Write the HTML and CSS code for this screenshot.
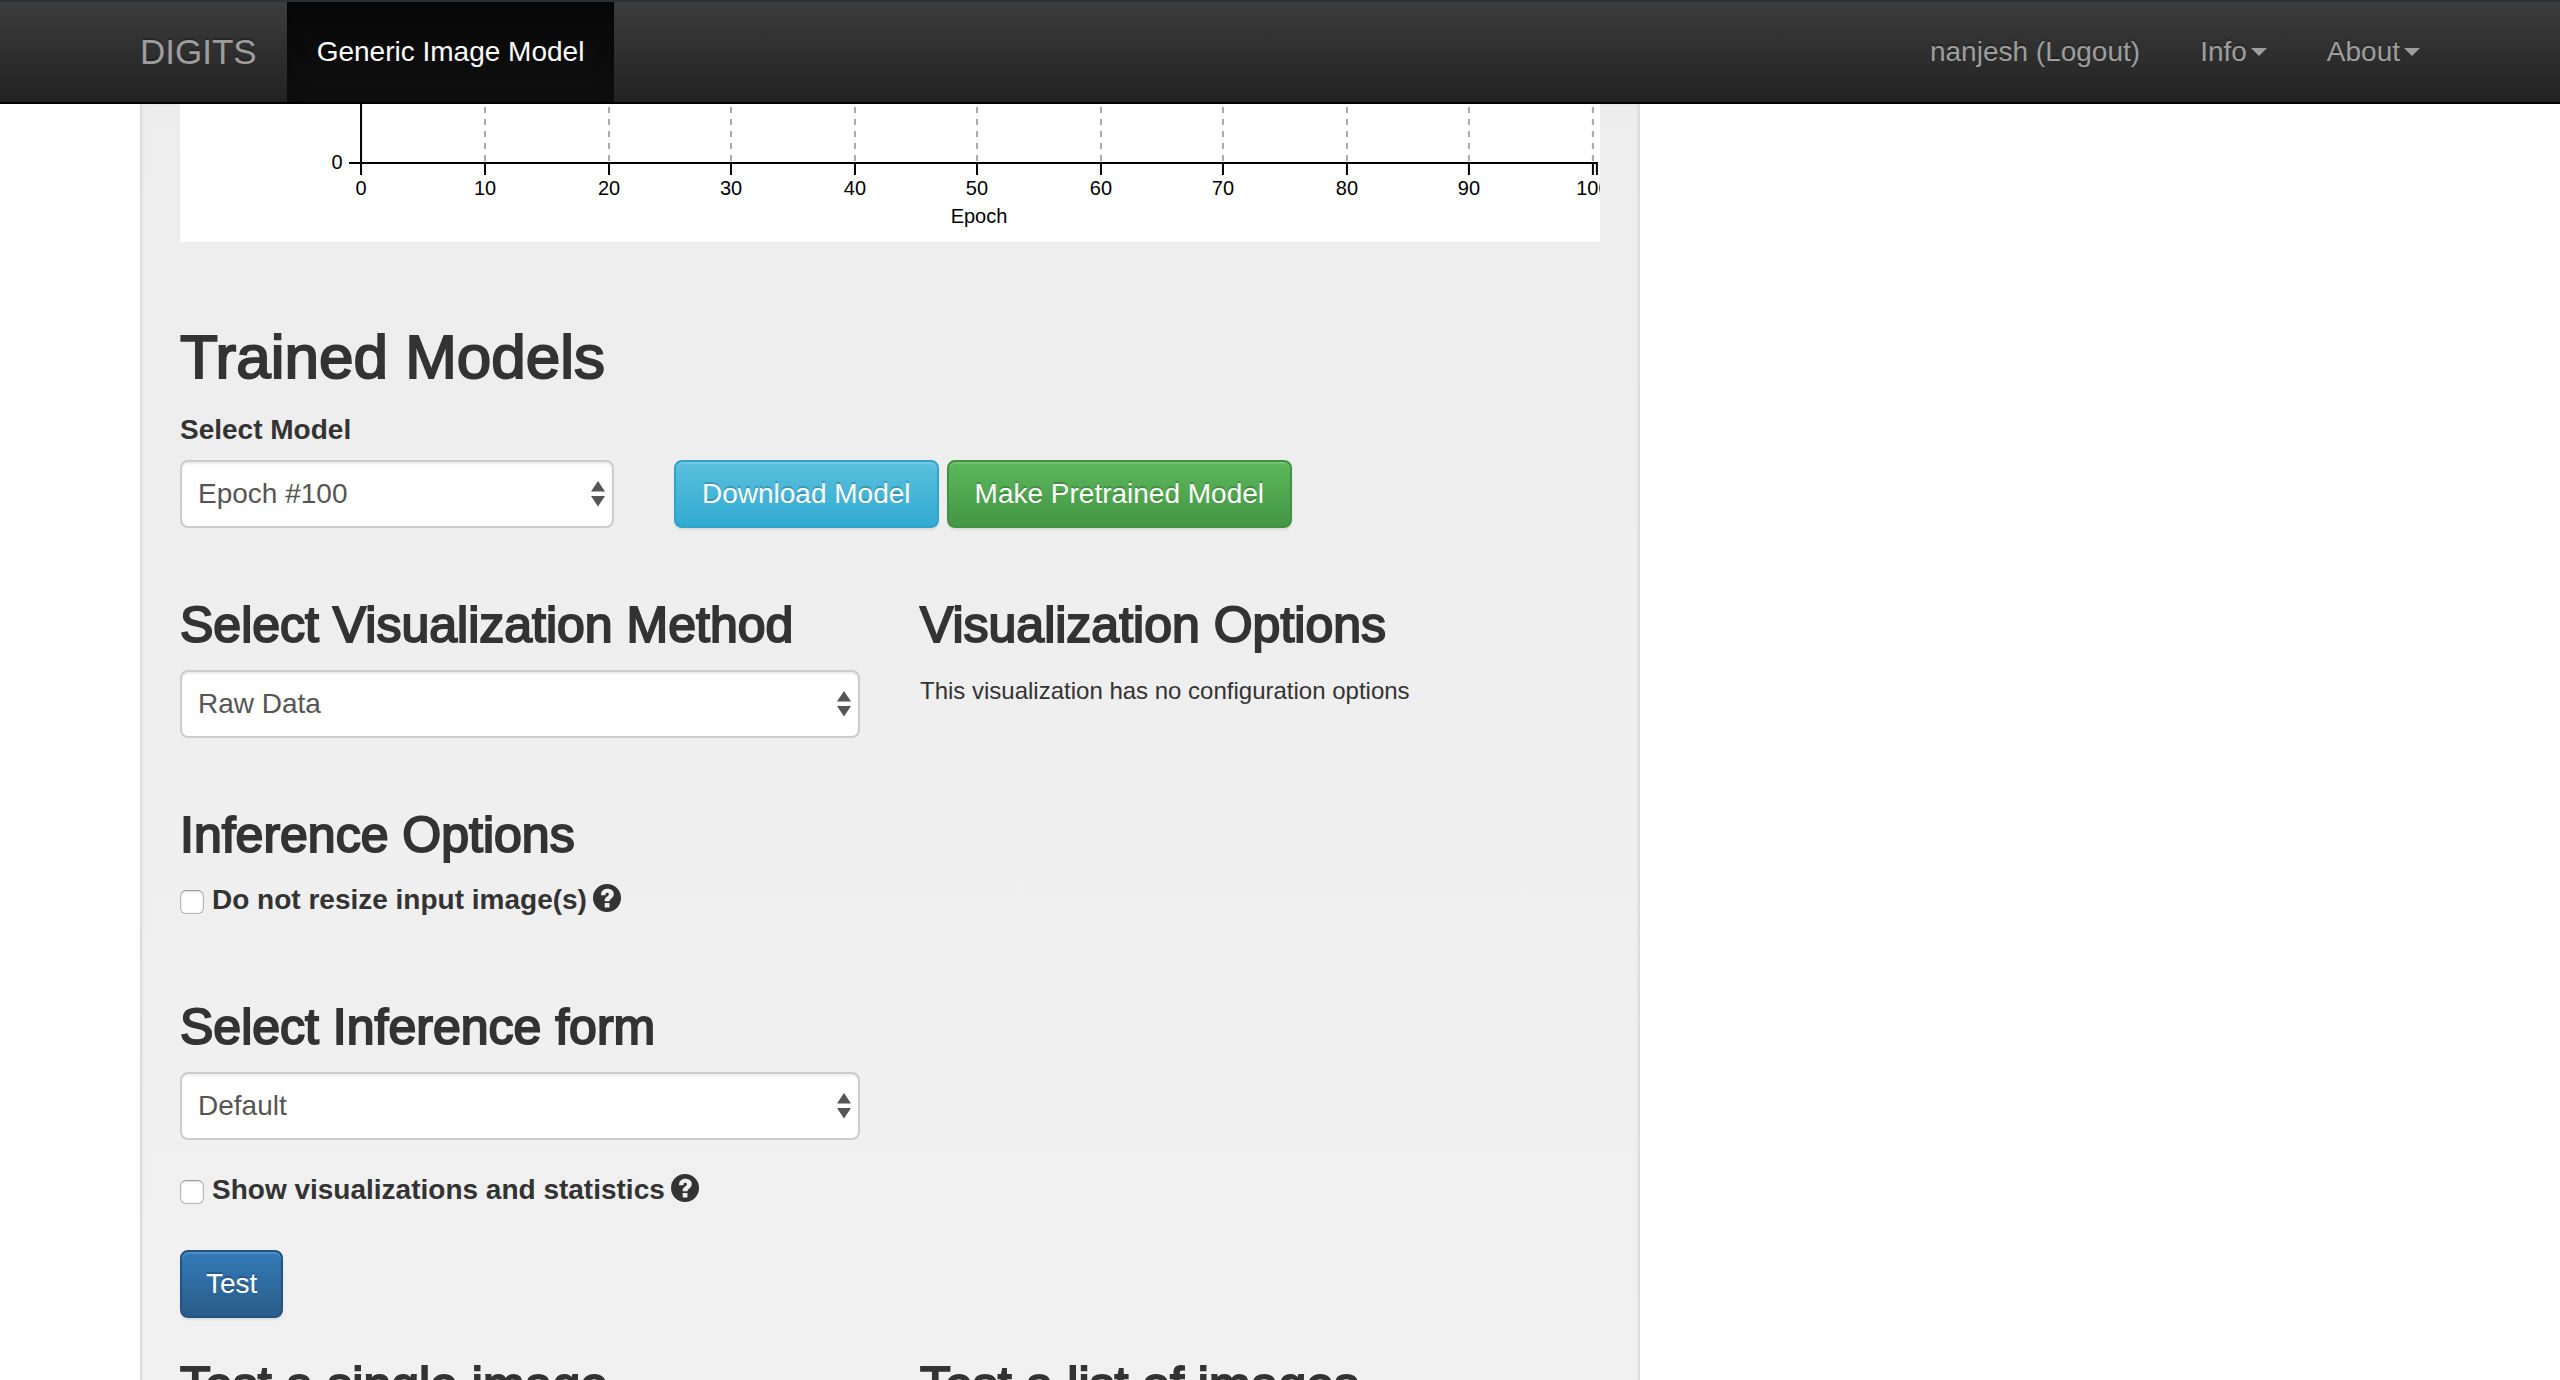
FILE: index.html
```html
<!DOCTYPE html>
<html lang="en">
<head>
<meta charset="utf-8">
<title>Generic Image Model - DIGITS</title>
<link rel="stylesheet" href="styles.css">
</head>
<body>
<svg class="symbols" aria-hidden="true">
  <symbol id="question" viewBox="0 0 28 28">
    <path fill-rule="evenodd" d="M14 0a14 14 0 1 1 0 28a14 14 0 0 1 0-28zM11.700 19v4.500h4.800v-4.500zM8 11.200h4.400c0-1.700.6-2.500 1.800-2.500c1.100 0 1.700.6 1.700 1.500c0 2-4.200 2.600-4.200 6v1h4.700c0-2.300 4.400-3.200 4.400-7.200c0-3-2.600-5.200-6.300-5.200c-4 0-6.500 2.400-6.500 6.400z"/>
  </symbol>
  <symbol id="updown" viewBox="0 0 14 26">
    <path d="M7 0l7 10.500H0zM0 15h14L7 25.500z"/>
  </symbol>
</svg>

<header class="navbar">
  <nav class="container nav">
    <a class="brand" href="#">DIGITS</a>
    <a class="nav-link active" href="#">Generic Image Model</a>
    <div class="nav-right">
      <a class="nav-link" href="#">nanjesh (Logout)</a>
      <a class="nav-link" href="#">Info<span class="caret"></span></a>
      <a class="nav-link" href="#">About<span class="caret"></span></a>
    </div>
  </nav>
</header>

<main class="content">
  <div class="container">
    <div class="well">
      <svg class="chart" viewBox="0 0 1420 138" role="img" aria-label="Training chart">
        <g class="grid-lines">
          <path d="M305 3V58M429 3V58M551 3V58M675 3V58M797 3V58M921 3V58M1043 3V58M1167 3V58M1289 3V58M1413 3V58"/>
        </g>
        <g class="axis">
          <path d="M181 0V71M169 59H1418M305 59V71M429 59V71M551 59V71M675 59V71M797 59V71M921 59V71M1043 59V71M1167 59V71M1289 59V71M1413 59V71M1417 59V71"/>
        </g>
        <g class="tick-labels">
          <text x="157" y="65">0</text>
          <text x="181" y="91">0</text>
          <text x="305" y="91">10</text>
          <text x="429" y="91">20</text>
          <text x="551" y="91">30</text>
          <text x="675" y="91">40</text>
          <text x="797" y="91">50</text>
          <text x="921" y="91">60</text>
          <text x="1043" y="91">70</text>
          <text x="1167" y="91">80</text>
          <text x="1289" y="91">90</text>
          <text x="1413" y="91">100</text>
          <text x="799" y="119">Epoch</text>
        </g>
      </svg>

      <h2>Trained Models</h2>
      <div class="row thirds">
        <div>
          <label class="field-label" for="snapshot">Select Model</label>
          <div class="select">
            <select id="snapshot"><option>Epoch #100</option></select>
            <svg class="arrows"><use href="#updown"/></svg>
          </div>
        </div>
        <div class="buttons">
          <button class="btn info" type="button">Download Model</button>
          <button class="btn success" type="button">Make Pretrained Model</button>
        </div>
      </div>

      <div class="row halves section">
        <div>
          <h3 id="vis-title">Select Visualization Method</h3>
          <div class="select">
            <select aria-labelledby="vis-title"><option>Raw Data</option></select>
            <svg class="arrows"><use href="#updown"/></svg>
          </div>
        </div>
        <div>
          <h3>Visualization Options</h3>
          <p><small>This visualization has no configuration options</small></p>
        </div>
      </div>

      <section class="section">
        <h3>Inference Options</h3>
        <div class="check">
          <input type="checkbox" id="no-resize">
          <label for="no-resize">Do not resize input image(s)</label>
          <svg class="help"><use href="#question"/></svg>
        </div>
      </section>

      <div class="row halves form">
        <div>
          <h3 id="form-title">Select Inference form</h3>
          <div class="select">
            <select aria-labelledby="form-title"><option>Default</option></select>
            <svg class="arrows"><use href="#updown"/></svg>
          </div>
        </div>
      </div>
      <div class="check stats">
        <input type="checkbox" id="show-stats">
        <label for="show-stats">Show visualizations and statistics</label>
        <svg class="help"><use href="#question"/></svg>
      </div>
      <button class="btn primary" type="button">Test</button>

      <div class="row halves tests">
        <h3>Test a single image</h3>
        <h3>Test a list of images</h3>
      </div>
    </div>
  </div>
</main>
</body>
</html>
```
FILE: styles.css
```css
* {
  box-sizing: border-box;
}

body {
  margin: 0;
  height: 100vh;
  display: flex;
  flex-direction: column;
  overflow: hidden;
  background: #fff;
  color: #333;
  font: 28px/40px "Helvetica Neue", Helvetica, "Liberation Sans", Arial, sans-serif;
}

.symbols {
  display: none;
}

.container {
  width: 100%;
  max-width: 2340px;
  margin: 0 auto;
  padding: 0 30px;
}

/* Navigation bar */
.navbar {
  flex: none;
  border-top: 2px solid #2b3033;
  border-bottom: 2px solid #000;
  background: linear-gradient(#3c3c3c, #222);
}

.nav {
  display: flex;
  height: 100px;
  padding-right: 0;
}

.nav a {
  color: #9d9d9d;
  text-decoration: none;
  text-shadow: 0 -2px 0 rgba(0, 0, 0, .25);
}

.brand {
  padding: 30px 30px 30px 0;
  font-size: 35px;
}

.nav-link {
  display: flex;
  align-items: center;
  padding: 0 30px;
}

.nav .active {
  color: #fff;
  background: linear-gradient(#080808, #0f0f0f);
  box-shadow: inset 0 6px 18px rgba(0, 0, 0, .25);
}

.nav-right {
  display: flex;
  margin-left: auto;
}

.caret {
  margin-left: 4px;
  border: 8px solid transparent;
  border-top-color: #9d9d9d;
  border-bottom: 0;
}

/* Job panel: two thirds of the grid, less the 60px gutter */
.content {
  flex: 1;
  min-height: 0;
  overflow: hidden;
}

.well {
  width: calc((100% + 60px) * 2 / 3 - 60px);
  padding: 0 38px 38px;
  border: 2px solid #dcdcdc;
  border-top: 0;
  background: linear-gradient(#ededed, #f1f1f1);
  box-shadow: inset 0 0 4px rgba(0, 0, 0, .05);
}

.chart {
  display: block;
  width: 100%;
  background: #fff;
}

.grid-lines {
  fill: none;
  stroke: #aaa;
  stroke-width: 2;
  stroke-dasharray: 6 6;
}

.axis {
  fill: none;
  stroke: #000;
  stroke-width: 2;
}

.tick-labels {
  font-size: 20px;
  text-anchor: middle;
}

h2,
h3 {
  margin: 0;
  font-weight: 400;
  -webkit-text-stroke: 2px #333;
}

h2 {
  margin: 82px 0 20px;
  font-size: 62px;
  line-height: 66px;
}

h3 {
  margin-bottom: 18px;
  font-size: 50px;
  line-height: 54px;
}

p {
  margin: 0;
}

small {
  font-size: 24px;
}

.row {
  display: grid;
  column-gap: 60px;
}

.thirds {
  grid-template-columns: minmax(0, 434fr) minmax(0, 926fr);
  align-items: end;
}

.halves {
  grid-template-columns: repeat(2, minmax(0, 1fr));
}

.section {
  margin-top: 70px;
}

.form {
  margin-top: 80px;
}

.tests {
  margin-top: 40px;
}

.field-label {
  display: block;
  margin-bottom: 10px;
  font-weight: 700;
}

.select {
  position: relative;
}

.select select {
  display: block;
  width: 100%;
  height: 68px;
  padding: 0 16px;
  appearance: none;
  border: 2px solid #ccc;
  border-radius: 8px;
  background: #fff;
  color: #555;
  font: inherit;
  box-shadow: inset 0 2px 2px rgba(0, 0, 0, .075);
}

.arrows {
  position: absolute;
  top: 21px;
  right: 9px;
  width: 14px;
  height: 26px;
  fill: #555;
  pointer-events: none;
}

.btn {
  height: 68px;
  padding: 0 24px;
  border: 2px solid;
  border-radius: 8px;
  color: #fff;
  font: inherit;
  white-space: nowrap;
  text-shadow: 0 -2px 0 rgba(0, 0, 0, .2);
  box-shadow: inset 0 2px 0 rgba(255, 255, 255, .15), 0 2px 2px rgba(0, 0, 0, .075);
}

.buttons {
  display: flex;
  gap: 8px;
}

.buttons .btn {
  padding: 0 26px;
}

.info {
  border-color: #31a4ca;
  background: linear-gradient(#5bc0de, #31abd1);
}

.success {
  border-color: #419142;
  background: linear-gradient(#5cb85c, #449644);
}

.primary {
  border-color: #245580;
  background: linear-gradient(#337ab7, #295d8a);
}

.check {
  display: flex;
  align-items: center;
  font-weight: 700;
}

.check input {
  width: 24px;
  height: 24px;
  margin: 4px 8px 0 0;
  appearance: none;
  border: 1px solid #b4b4b4;
  border-top-color: #999;
  border-radius: 6px;
  background: #fff;
  box-shadow: inset 0 1px 2px rgba(0, 0, 0, .15);
}

.help {
  width: 28px;
  height: 28px;
  margin: 0 0 4px 6px;
  fill: #333;
}

.stats {
  margin: 30px 0 40px;
}
```
